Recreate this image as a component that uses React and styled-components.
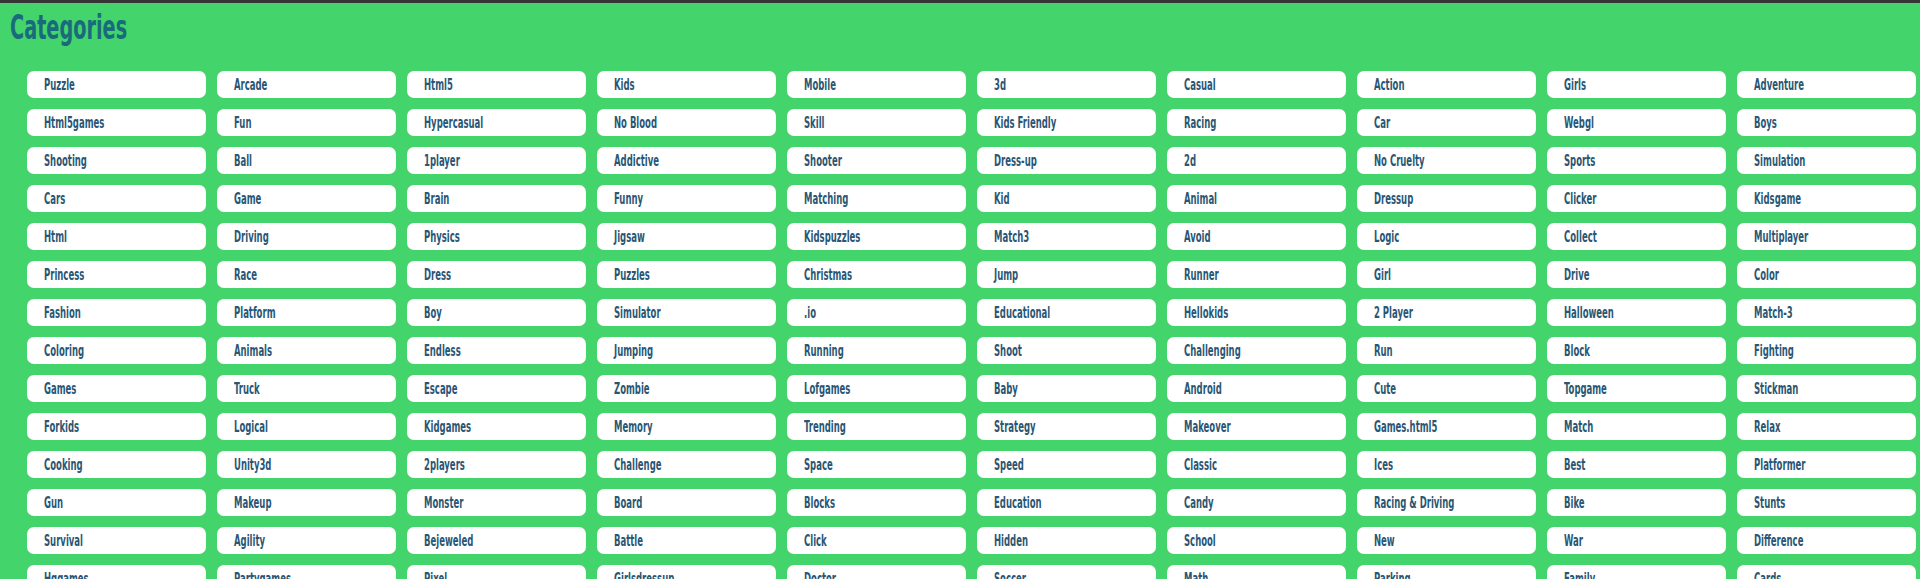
import React from "react";
import styled, { createGlobalStyle } from "styled-components";

const GlobalStyle = createGlobalStyle`
  html, body {
    margin: 0;
    padding: 0;
    background: #43d46b;
  }
  * { box-sizing: border-box; }
`;

const Page = styled.section`
  min-height: 100vh;
  background: #43d46b;
  border-top: 3px solid #353535;
  font-family: "Liberation Sans Narrow", "DejaVu Sans Condensed", "Liberation Sans", sans-serif;
`;

const Title = styled.h2`
  margin: 4px 0 0 10px;
  font-size: 34px;
  line-height: 40px;
  font-weight: 700;
  color: #196b7c;
  transform: scaleX(0.63);
  transform-origin: left center;
  display: inline-block;
`;

const Grid = styled.ul`
  list-style: none;
  margin: 24px 0 0 0;
  padding: 0 0 0 27px;
  display: grid;
  grid-template-columns: repeat(10, 179px);
  column-gap: 11px;
  row-gap: 11px;
`;

const Pill = styled.li`
  height: 27px;
  background: #ffffff;
  border-radius: 7px;
  display: flex;
  align-items: center;
  padding-left: 17px;
  overflow: hidden;
`;

const Label = styled.a`
  display: inline-block;
  font-size: 16px;
  font-weight: 700;
  color: #2a5673;
  text-decoration: none;
  white-space: nowrap;
  transform: scaleX(0.59);
  transform-origin: left center;
`;

const categories = [
  "Puzzle", "Arcade", "Html5", "Kids", "Mobile", "3d", "Casual", "Action", "Girls", "Adventure",
  "Html5games", "Fun", "Hypercasual", "No Blood", "Skill", "Kids Friendly", "Racing", "Car", "Webgl", "Boys",
  "Shooting", "Ball", "1player", "Addictive", "Shooter", "Dress-up", "2d", "No Cruelty", "Sports", "Simulation",
  "Cars", "Game", "Brain", "Funny", "Matching", "Kid", "Animal", "Dressup", "Clicker", "Kidsgame",
  "Html", "Driving", "Physics", "Jigsaw", "Kidspuzzles", "Match3", "Avoid", "Logic", "Collect", "Multiplayer",
  "Princess", "Race", "Dress", "Puzzles", "Christmas", "Jump", "Runner", "Girl", "Drive", "Color",
  "Fashion", "Platform", "Boy", "Simulator", ".io", "Educational", "Hellokids", "2 Player", "Halloween", "Match-3",
  "Coloring", "Animals", "Endless", "Jumping", "Running", "Shoot", "Challenging", "Run", "Block", "Fighting",
  "Games", "Truck", "Escape", "Zombie", "Lofgames", "Baby", "Android", "Cute", "Topgame", "Stickman",
  "Forkids", "Logical", "Kidgames", "Memory", "Trending", "Strategy", "Makeover", "Games.html5", "Match", "Relax",
  "Cooking", "Unity3d", "2players", "Challenge", "Space", "Speed", "Classic", "Ices", "Best", "Platformer",
  "Gun", "Makeup", "Monster", "Board", "Blocks", "Education", "Candy", "Racing & Driving", "Bike", "Stunts",
  "Survival", "Agility", "Bejeweled", "Battle", "Click", "Hidden", "School", "New", "War", "Difference",
  "Hggames", "Partygames", "Pixel", "Girlsdressup", "Doctor", "Soccer", "Math", "Parking", "Family", "Cards",
];

export default function App() {
  return (
    <>
      <GlobalStyle />
      <Page>
        <Title>Categories</Title>
        <Grid>
          {categories.map((c) => (
            <Pill key={c}>
              <Label href="#">{c}</Label>
            </Pill>
          ))}
        </Grid>
      </Page>
    </>
  );
}
